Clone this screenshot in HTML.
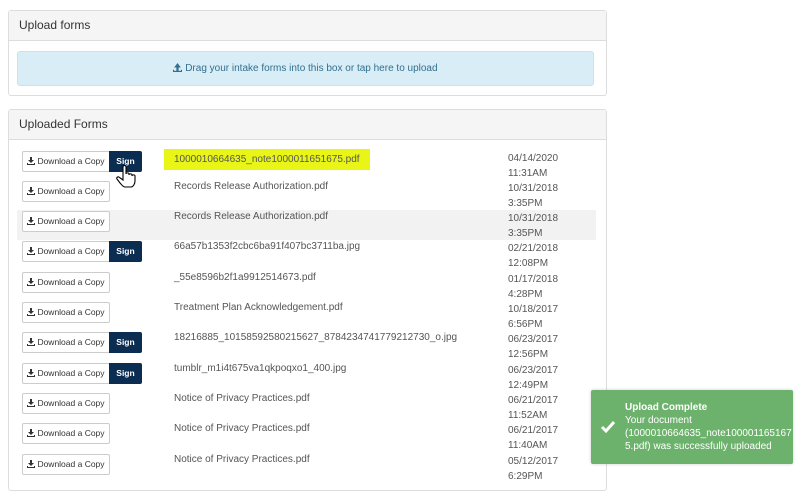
<!DOCTYPE html>
<html><head><style>
body{margin:0;width:800px;height:475px;overflow:hidden;background:#fff;font-family:"Liberation Sans",sans-serif;font-size:10px;color:#555;position:relative}
.panel{position:absolute;left:8px;width:597px;border:1px solid #ddd;border-radius:3px;background:#fff}
.ph{height:29px;background:#f5f5f5;border-bottom:1px solid #ddd;line-height:29px;padding-left:10px;font-size:12px;color:#333}
.drop{position:absolute;left:8px;top:40px;width:575px;height:33px;background:#d9edf7;border:1px solid #bce8f1;border-radius:3px;text-align:center;line-height:33px;color:#31708f;font-size:10px}
.row{position:absolute;left:8px;width:579px;height:30px}
.row.s{background:#f2f2f2}
.dl{position:absolute;left:5px;top:1px;width:86px;height:19px;border:1px solid #ccc;border-radius:2px;background:#fff;font-size:8.5px;color:#333;line-height:19px;text-align:center}
.dl svg{vertical-align:-1px;margin-right:2px}
.sg{position:absolute;left:92px;top:1px;width:33px;height:21px;background:#0c2d52;border-radius:0 2px 2px 0;color:#fff;font-size:8.5px;font-weight:bold;line-height:21px;text-align:center}
.nm{position:absolute;left:157px;top:1px;font-size:10px;color:#555}
.dt{position:absolute;left:491px;top:1px;font-size:10px;line-height:15px;color:#555}
.toast{position:absolute;left:591px;top:390px;width:202px;height:74px;background:#6db26c;border-radius:2px;color:#fff;font-size:10px;line-height:13px;box-shadow:0 0 3px rgba(0,0,0,.2)}
</style></head><body>
<svg width="0" height="0" style="position:absolute"><defs><symbol id="d" viewBox="0 0 8 8"><path d="M3 0h2v3h2L4 6 1 3h2z M0 6h1v1h6V6h1v2H0z" fill="#333"/></symbol></defs></svg>
<div class="panel" style="top:10px;height:84px">
<div class="ph">Upload forms</div>
<div class="drop"><svg width="9" height="9" viewBox="0 0 8 8" style="vertical-align:-1px"><path d="M3 7V4H1l3-4 3 4H5v3z M0 6h1v1h6V6h1v2H0z" fill="#31708f"/></svg> Drag your intake forms into this box or tap here to upload</div>
</div>
<div class="panel" style="top:109px;height:380px">
<div class="ph">Uploaded Forms</div>
<div class="row" style="top:40px"><div class="dl"><svg width="8" height="8"><use href="#d"/></svg>Download a Copy</div><div class="sg">Sign</div><div class="nm" style="background:#e8f516;left:147px;top:-1px;padding:5px 10px;color:#555">1000010664635_note1000011651675.pdf</div><div class="dt">04/14/2020<br>11:31AM</div></div>
<div class="row" style="top:70px"><div class="dl"><svg width="8" height="8"><use href="#d"/></svg>Download a Copy</div><div class="nm">Records Release Authorization.pdf</div><div class="dt">10/31/2018<br>3:35PM</div></div>
<div class="row s" style="top:100px"><div class="dl"><svg width="8" height="8"><use href="#d"/></svg>Download a Copy</div><div class="nm">Records Release Authorization.pdf</div><div class="dt">10/31/2018<br>3:35PM</div></div>
<div class="row" style="top:130px"><div class="dl"><svg width="8" height="8"><use href="#d"/></svg>Download a Copy</div><div class="sg">Sign</div><div class="nm">66a57b1353f2cbc6ba91f407bc3711ba.jpg</div><div class="dt">02/21/2018<br>12:08PM</div></div>
<div class="row" style="top:161px"><div class="dl"><svg width="8" height="8"><use href="#d"/></svg>Download a Copy</div><div class="nm">_55e8596b2f1a9912514673.pdf</div><div class="dt">01/17/2018<br>4:28PM</div></div>
<div class="row" style="top:191px"><div class="dl"><svg width="8" height="8"><use href="#d"/></svg>Download a Copy</div><div class="nm">Treatment Plan Acknowledgement.pdf</div><div class="dt">10/18/2017<br>6:56PM</div></div>
<div class="row" style="top:221px"><div class="dl"><svg width="8" height="8"><use href="#d"/></svg>Download a Copy</div><div class="sg">Sign</div><div class="nm">18216885_10158592580215627_8784234741779212730_o.jpg</div><div class="dt">06/23/2017<br>12:56PM</div></div>
<div class="row" style="top:252px"><div class="dl"><svg width="8" height="8"><use href="#d"/></svg>Download a Copy</div><div class="sg">Sign</div><div class="nm">tumblr_m1i4t675va1qkpoqxo1_400.jpg</div><div class="dt">06/23/2017<br>12:49PM</div></div>
<div class="row" style="top:282px"><div class="dl"><svg width="8" height="8"><use href="#d"/></svg>Download a Copy</div><div class="nm">Notice of Privacy Practices.pdf</div><div class="dt">06/21/2017<br>11:52AM</div></div>
<div class="row" style="top:312px"><div class="dl"><svg width="8" height="8"><use href="#d"/></svg>Download a Copy</div><div class="nm">Notice of Privacy Practices.pdf</div><div class="dt">06/21/2017<br>11:40AM</div></div>
<div class="row" style="top:343px"><div class="dl"><svg width="8" height="8"><use href="#d"/></svg>Download a Copy</div><div class="nm">Notice of Privacy Practices.pdf</div><div class="dt">05/12/2017<br>6:29PM</div></div>
</div>
<svg style="position:absolute;left:116px;top:165px" width="22" height="24" viewBox="0 0 22 24"><path d="M7 2c0-2 3-2 3 0v7c0-1.5 3-1.5 3 0v1c0-1.5 3-1.5 3 0v1c0-1.5 3-1.5 3 0v5c0 3-2 6-4 6h-6c-2 0-3-2-5-4l-3-4c-1-1.5 1-3 2.5-1.5L7 15z" fill="#fff" stroke="#000" stroke-width="1.1"/></svg>
<div class="toast">
<svg style="position:absolute;left:9px;top:30px" width="16" height="14" viewBox="0 0 16 14"><path d="M2 7l4 4 8-9" stroke="#fff" stroke-width="3" fill="none"/></svg>
<div style="position:absolute;left:34px;top:11px;width:165px"><b>Upload Complete</b><br>Your document<br>(1000010664635_note100001165167<br>5.pdf) was successfully uploaded</div>
</div>
</body></html>
